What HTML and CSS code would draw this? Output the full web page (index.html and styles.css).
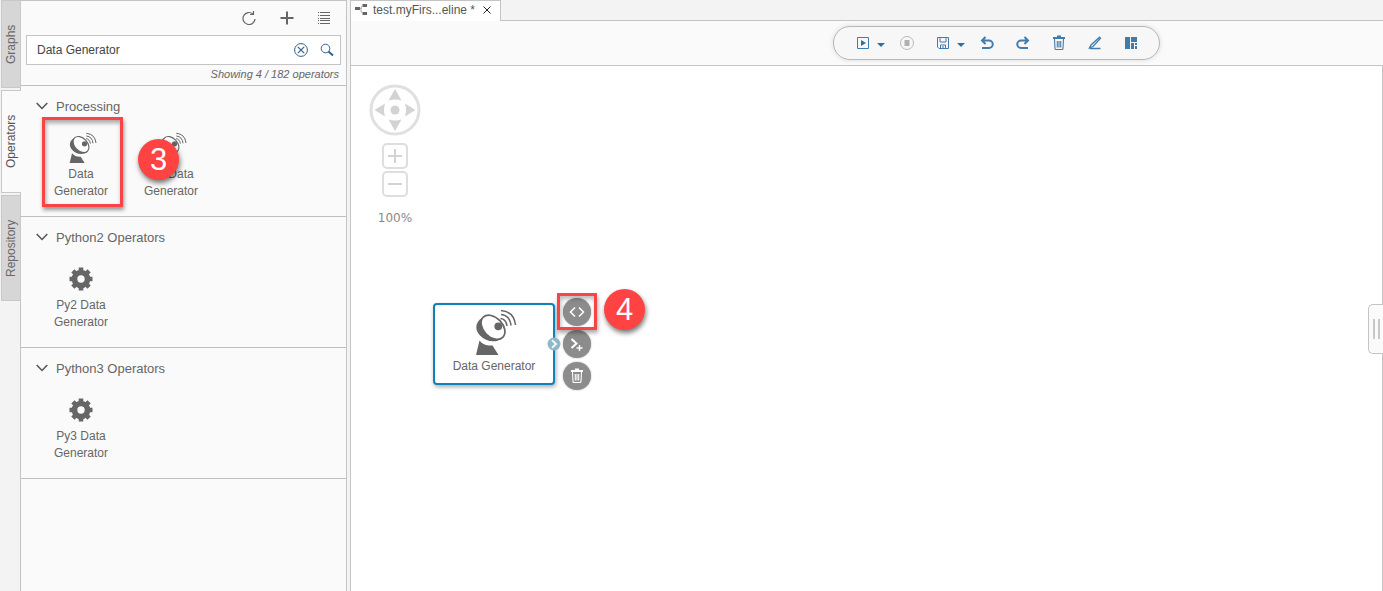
FILE: index.html
```html
<!DOCTYPE html>
<html lang="en">
<head>
<meta charset="utf-8">
<title>Pipeline Modeler</title>
<link rel="stylesheet" href="styles.css">
</head>
<body>
<svg class="defs" aria-hidden="true">
  <symbol id="dish" viewBox="0 0 42 47">
    <path d="M7.500 8.500C0 13-.5 21 5 26.500C11 33 21 34.500 27.500 29Z" fill="#666"/>
    <ellipse cx="18" cy="18.300" rx="14" ry="9.600" transform="rotate(46 18 18.300)" fill="#fff" stroke="#666" stroke-width="1.700"/>
    <circle cx="23.300" cy="17.300" r="3.900" fill="#666"/>
    <path d="M4.500 31.500C8 36 13 37 17.500 36.500L23.500 46H1Z" fill="#666"/>
    <path d="M25.500 9.500Q31 10 32 17M26 5.500Q35 6.500 36 16.500M26 1.500Q39 2.500 40.500 16" fill="none" stroke="#666" stroke-width="1.500"/>
  </symbol>
  <symbol id="gear" viewBox="0 0 24 24">
    <circle cx="12" cy="12" r="6.500" fill="none" stroke="#666" stroke-width="5.600"/>
    <path id="teeth" d="M12 .5v4M12 19.500v4M.5 12h4M19.500 12h4" stroke="#666" stroke-width="4.600"/>
    <use href="#teeth" transform="rotate(45 12 12)"/>
  </symbol>
  <symbol id="trash" viewBox="0 0 14 16">
    <path d="M1 3h12M5 1.500h4" stroke="currentColor" stroke-width="2" fill="none"/>
    <path d="M2.500 4l.5 9.500q0 1 1 1h6q1 0 1-1l.5-9.500M5.300 6v6.500M7 6v6.500M8.700 6v6.500" stroke="currentColor" stroke-width="1.100" fill="none"/>
  </symbol>
  <symbol id="chevron" viewBox="0 0 12 8"><path d="M.7 1l5.300 5.500L11.300 1" fill="none" stroke="#555" stroke-width="1.500"/></symbol>
</svg>
<div class="app">
  <nav class="rail" aria-label="Panels">
    <button class="rail-tab graphs">Graphs</button>
    <button class="rail-tab operators active">Operators</button>
    <button class="rail-tab repository">Repository</button>
  </nav>
  <aside class="panel">
    <header class="panel-head">
      <div class="panel-tools">
        <button aria-label="Refresh"><svg width="14" height="14" viewBox="0 0 14 14" fill="none" stroke="#666" stroke-width="1.200"><path d="M11 3A6 6 0 1 0 13 8M11.500 0v3.500H8"/></svg></button>
        <button aria-label="Add"><svg width="14" height="14" viewBox="0 0 14 14"><path d="M7 .5v13M.5 7h13" stroke="#666" stroke-width="2"/></svg></button>
        <button aria-label="List view"><svg width="12" height="12" viewBox="0 0 12 12"><path d="M0 .5h1M0 3.500h1M0 6.500h1M0 8.500h1M0 11.500h1M2 .5h10M2 3.500h10M2 6.500h10M2 8.500h10M2 11.500h10" stroke="#666"/></svg></button>
      </div>
      <div class="search">
        <input type="text" aria-label="Search operators" value="Data Generator">
        <button aria-label="Clear"><svg width="14" height="14" viewBox="0 0 14 14" fill="none" stroke="#346187"><circle cx="7" cy="7" r="6.400"/><path d="M3.800 3.800l6.400 6.400M10.200 3.800l-6.400 6.400" stroke-width="1.200"/></svg></button>
        <button aria-label="Search"><svg width="14" height="14" viewBox="0 0 14 14" fill="none" stroke="#346187"><circle cx="5.500" cy="5.500" r="4.300"/><path d="M8.500 8.500l4.500 4" stroke-width="1.900"/></svg></button>
      </div>
      <p class="count">Showing 4 / 182 operators</p>
    </header>
    <section class="group">
      <h2><svg width="12" height="8"><use href="#chevron"/></svg>Processing</h2>
      <div class="items">
        <div class="item marked"><svg class="item-icon dish" width="28" height="32"><use href="#dish"/></svg>Data Generator</div>
        <div class="item"><svg class="item-icon dish" width="28" height="32"><use href="#dish"/></svg><span class="indent">Data</span> Generator<span class="step step-three">3</span></div>
      </div>
    </section>
    <section class="group">
      <h2><svg width="12" height="8"><use href="#chevron"/></svg>Python2 Operators</h2>
      <div class="items"><div class="item"><svg class="item-icon" width="24" height="32"><use href="#gear"/></svg>Py2 Data Generator</div></div>
    </section>
    <section class="group">
      <h2><svg width="12" height="8"><use href="#chevron"/></svg>Python3 Operators</h2>
      <div class="items"><div class="item"><svg class="item-icon" width="24" height="32"><use href="#gear"/></svg>Py3 Data Generator</div></div>
    </section>
  </aside>
  <main class="editor">
    <div class="tabs">
      <div class="tab">
        <svg width="13" height="12" viewBox="0 0 13 12"><path d="M0 3h5v3H0zM7.500 0H12v3H7.500zM7.500 8H12v3H7.500z" fill="#666"/><path d="M5 4.500h1.500M7.500 2Q6 2 6 4v3q0 2 1.500 2" stroke="#aaa" fill="none"/></svg>
        <span>test.myFirs...eline *</span>
        <button aria-label="Close tab"><svg width="8" height="8" viewBox="0 0 8 8"><path d="M.5 .5l7 7M7.500 .5l-7 7" stroke="#222"/></svg></button>
      </div>
      <div class="tab-rest"></div>
    </div>
    <div class="toolbar">
      <div class="pill">
        <button class="split" aria-label="Run"><svg width="14" height="12" viewBox="0 0 14 12"><path d="M1.500 .5h11v11h-11z" fill="none" stroke="#427cac"/><path d="M5 3l5 3-5 3z" fill="#346f9f"/></svg><i class="caret"></i></button>
        <button aria-label="Stop"><svg width="14" height="14" viewBox="0 0 14 14"><circle cx="7" cy="7" r="6.500" fill="none" stroke="#b8b8b8"/><path d="M4.500 4h5v6h-5z" fill="#b0b0b0"/></svg></button>
        <button class="split" aria-label="Save"><svg width="14" height="12" viewBox="0 0 14 12" fill="none" stroke="#427cac"><path d="M1.500 .5h11v11H3l-1.500-1.500zM4 .5v4.500h6V.5M4.500 11.500V8h5v3.500M7 9v2"/></svg><i class="caret"></i></button>
        <button aria-label="Undo"><svg width="14" height="14" viewBox="0 0 14 14" fill="none" stroke="#427cac" stroke-width="2"><path d="M5.500 1L2 4.500 5.500 8M2 4.500h7a3.700 3.700 0 0 1 0 7.500H2"/></svg></button>
        <button aria-label="Redo"><svg width="14" height="14" viewBox="0 0 14 14" fill="none" stroke="#427cac" stroke-width="2"><path d="M8.500 1L12 4.500 8.500 8M12 4.500H5a3.700 3.700 0 0 0 0 7.500H12"/></svg></button>
        <button aria-label="Delete"><svg width="14" height="16"><use href="#trash"/></svg></button>
        <button aria-label="Edit"><svg width="14" height="14" viewBox="0 0 14 14" fill="none" stroke="#427cac"><path d="M11.500 1.200l1 1L5 10.500l-3.500 1.500L3 9z" stroke-width="1.300"/><path d="M2 12.500h10.500" stroke-width="1.500"/></svg></button>
        <button aria-label="Layout"><svg width="14" height="12" viewBox="0 0 14 12" fill="#427cac"><path d="M1 0h5v12H1zM7 0h6v5H7zM7 6h3v6H7zM11 6h2v2h-2zM11 9h2v3h-2z"/></svg></button>
      </div>
    </div>
    <div class="canvas">
      <div class="nav">
        <svg width="52" height="52" viewBox="0 0 52 52" fill="#d3d3d3"><circle cx="26" cy="26" r="24" fill="none" stroke="#e0e0e0" stroke-width="3"/><circle cx="26" cy="26" r="4.500"/><path d="M26 5l6.500 11.500q-6.500-2-13 0zM26 47l6.500-11.500q-6.500 2-13 0zM5.500 26L16 19.500q-2 6.500 0 13zM46.500 26L36 19.500q2 6.500 0 13z"/></svg>
        <button aria-label="Zoom in"><svg width="16" height="16"><path d="M8 1v14M1 8h14" stroke="#d3d3d3" stroke-width="2"/></svg></button>
        <button aria-label="Zoom out"><svg width="16" height="16"><path d="M1 8h14" stroke="#d3d3d3" stroke-width="2"/></svg></button>
        <span class="percent">100%</span>
      </div>
      <div class="node"><svg class="node-icon" width="42" height="47"><use href="#dish"/></svg><span>Data Generator</span>
        <svg class="port" width="14" height="14" viewBox="0 0 14 14"><circle cx="7" cy="7" r="6.500" fill="#8fb8cb"/><path d="M5 3.200L9 7l-4 3.800" fill="none" stroke="#fff" stroke-width="1.800"/></svg>
      </div>
      <div class="node-actions">
        <button aria-label="Open script"><svg width="16" height="14" viewBox="0 0 16 14" fill="none" stroke="#fff" stroke-width="1.500"><path d="M6 2.500L1.500 7 6 11.500M10 2.500L14.500 7 10 11.500"/></svg></button>
        <button aria-label="Add port"><svg width="16" height="16" viewBox="0 0 16 16" fill="none" stroke="#fff"><path d="M2.500 3l5 4.500-5 4.500" stroke-width="2"/><path d="M10.500 9v6M7.500 12h6" stroke-width="1.400"/></svg></button>
        <button aria-label="Delete node"><svg width="14" height="16"><use href="#trash"/></svg></button>
      </div>
      <div class="mark-action"></div>
      <span class="step step-four">4</span>
      <button class="drawer" aria-label="Open configuration"></button>
    </div>
  </main>
</div>
</body>
</html>
```
FILE: styles.css
```css
* { box-sizing: border-box; }
body { margin: 0; font: 12px/17px "Liberation Sans", Arial, sans-serif; color: #666; background: #f3f3f3; }
button { border: 0; padding: 0; margin: 0; background: none; font: inherit; color: inherit; display: flex; align-items: center; justify-content: center; }
svg { display: block; flex: none; }
.defs { position: absolute; width: 0; height: 0; }
.app { display: flex; min-height: 100vh; }

.rail { width: 20px; flex: none; display: flex; flex-direction: column; gap: 2px; padding-left: 1px; }
.rail-tab { width: 20px; writing-mode: vertical-rl; transform: rotate(180deg); background: #d6d6d6; border: 1px solid #c8c8c8; color: #666; }
.graphs { height: 88px; }
.operators { height: 103px; }
.repository { height: 106px; }
.rail-tab.active { background: #fafafa; border-left: 0; z-index: 1; color: #555; }

.panel { width: 327px; flex: none; background: #fafafa; border: 1px solid #c4c4c4; border-bottom: 0; }
.panel-head { border-bottom: 1px solid #bfbfbf; height: 85px; padding: 0 5px; }
.panel-tools { height: 34px; display: flex; justify-content: flex-end; align-items: center; gap: 24px; padding-right: 11px; }
.search { height: 30px; display: flex; align-items: center; gap: 12px; background: #fff; border: 1px solid #c4c4c4; padding: 0 6px 0 10px; }
.search input { flex: 1; min-width: 0; border: 0; outline: 0; padding: 0; font: inherit; color: #444; background: none; }
.count { margin: 1px 2px 0 0; font-size: 11px; font-style: italic; text-align: right; color: #666; }
.group { height: 131px; border-bottom: 1px solid #bfbfbf; }
.group h2 { margin: 0; height: 31px; padding: 10px 0 0 15px; display: flex; align-items: center; gap: 8px; font-size: 13px; font-weight: normal; line-height: 21px; }
.group h2 svg { margin-bottom: 2px; }
.items { display: flex; gap: 9px; padding-left: 21px; }
.item { position: relative; width: 81px; height: 90px; padding: 15px 13px 0 10px; text-align: center; }
.item-icon { margin: 0 auto 2px; }
.item-icon.dish { margin-left: 17px; }
.indent { padding-left: 20px; }
.marked::after { content: ""; position: absolute; inset: 0; border: 3px solid #f84444; box-shadow: 1px 3px 4px #0006, inset 1px 3px 4px #0005; }
.step { position: absolute; width: 41px; height: 41px; border-radius: 50%; background: #ff4242; color: #fff; font-size: 31px; line-height: 41px; text-align: center; box-shadow: 1px 3px 5px #0008; }
.step-three { left: 6px; top: 22px; }

.editor { flex: 1; min-width: 0; margin-left: 3px; display: flex; flex-direction: column; border-left: 1px solid #c4c4c4; }
.tabs { display: flex; height: 21px; }
.tab { display: flex; align-items: center; background: #fff; border: 1px solid #c4c4c4; border-width: 1px 1px 0 0; padding: 0 9px 2px 4px; color: #555; }
.tab span { margin: 0 8px 0 5px; }
.tab-rest { flex: 1; border-bottom: 1px solid #c4c4c4; }
.toolbar { height: 45px; background: #fafafa; border-bottom: 1px solid #c4c4c4; display: flex; align-items: center; justify-content: center; padding-left: 259px; }
.pill { height: 34px; display: flex; align-items: center; gap: 22px; padding: 0 21px 0 22px; border: 1px solid #b8b8b8; border-radius: 17px; background: #f7f7f7; box-shadow: 0 0 5px #0002; color: #427cac; }
.split { gap: 7px; }
.pill .split { margin-right: -7px; }
.caret { border: 4px solid transparent; border-top-color: #346f9f; border-bottom: 0; margin-top: 3px; }

.canvas { flex: 1; position: relative; background: #fff; border-right: 1px solid #c4c4c4; }
.nav { position: absolute; left: 18px; top: 18px; display: flex; flex-direction: column; align-items: center; }
.nav button { width: 26px; height: 26px; border: 2px solid #dedede; border-radius: 5px; margin-top: 2px; }
.nav svg + button { margin-top: 7px; }
.percent { margin-top: 13px; font: 12px/17px "DejaVu Sans", sans-serif; color: #888; }
.node { position: absolute; left: 82px; top: 237px; width: 122px; height: 82px; padding-top: 4px; border: 2px solid #0f82b8; border-radius: 4px; background: #fff; box-shadow: 1px 2px 4px #0005; display: flex; flex-direction: column; align-items: center; gap: 2px; }
.node-icon { margin-left: 4px; }
.port { position: absolute; right: -8px; top: 32px; }
.node-actions { position: absolute; left: 212px; top: 232px; display: flex; flex-direction: column; gap: 4px; }
.node-actions button { width: 28px; height: 28px; border-radius: 50%; background: #8c8c8c; color: #fff; box-shadow: 0 0 2px #0005; }
.mark-action { position: absolute; left: 206px; top: 227px; width: 40px; height: 37px; border: 3px solid #f84444; box-shadow: 1px 3px 4px #0005, inset 1px 3px 4px #0004; }
.step-four { left: 253px; top: 223px; }
.drawer { position: absolute; right: -1px; top: 238px; width: 15px; height: 50px; background: #fafafa; border: 1px solid #c4c4c4; border-right: 0; border-radius: 5px 0 0 5px; gap: 3px; }
.drawer::before, .drawer::after { content: ""; width: 2px; height: 20px; background: #c8c8c8; }
```
